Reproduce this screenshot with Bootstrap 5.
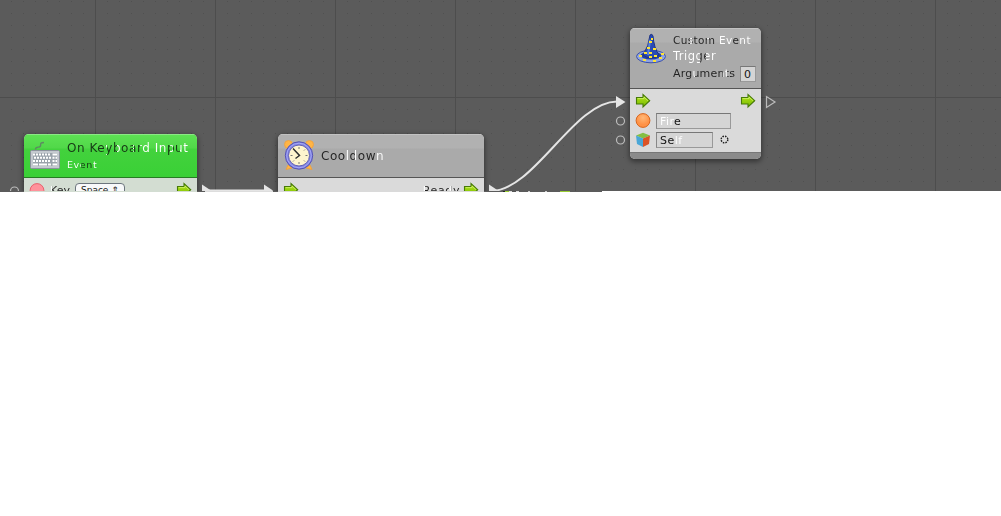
<!DOCTYPE html>
<html lang="en"><head><meta charset="utf-8"><title>Flow graph</title>
<link rel="stylesheet" href="https://cdn.jsdelivr.net/npm/bootstrap@5.3.0/dist/css/bootstrap.min.css">
<style>
body{background:#fff;font-family:"DejaVu Sans",Verdana,sans-serif;font-size:11px;line-height:15px;color:#161616}
.graph{height:191px;background-color:#5b5b5b;background-image:linear-gradient(90deg,#4d4d4d 1px,transparent 1px),linear-gradient(#4d4d4d 1px,transparent 1px),conic-gradient(from 270deg at 1px 1px,#505050 90deg,transparent 0);background-size:120px 120px,120px 120px,12px 12px;background-position:95px 0,0 97px,11px 1px}
.edge-row{height:1px;width:602px;background:linear-gradient(90deg,#5b5b5b 24px,#d3ddd2 24px 197px,#5b5b5b 197px 205px,#ddd 205px 273px,#5b5b5b 273px 278px,#dadada 278px 484px,#5b5b5b 484px 503px,#222 503px 505px,#9c3 505px 509px,#ddd 509px 512px,#555 512px 516px,#ddd 516px 519px,#5b5b5b 519px 528px,#ccc 528px 530px,#5b5b5b 530px 545px,#ccc 545px 547px,#5b5b5b 547px 560px,#9c3 560px 570px,#5b5b5b 570px)}
.wires{left:0;top:0}
.node{border-radius:5px;background:#dadada;box-shadow:0 2px 5px 1px #0006;overflow:hidden}
.node-head{background:linear-gradient(#b1b1b1 0 14px,#aaa 15px);border-bottom:1px solid #555;box-shadow:inset 0 1px #c2c2c2}
.node-green .node-head{background:linear-gradient(#5ee254,#51d849 14px,#43d23d 15px,#3ad036);border-color:#277c24;box-shadow:inset 0 1px #8be885}
.node-green{background:#d3ddd2}
.n1{left:24px;top:134px;width:173px;height:70px}
.n2{left:278px;top:134px;width:206px;height:70px}
.n3{left:630px;top:28px;width:131px;height:131px}
.n1 .node-head,.n2 .node-head{height:44px}
.n3 .node-head{height:61px}
.n3 .node-foot{height:7px;background:#8b8b8b;border-top:1px solid #777}
.ink{color:transparent;background-clip:text;-webkit-background-clip:text;white-space:nowrap;display:inline-block}
.cell{border:1px solid #999;border-top-color:#777;border-left-color:#888;background:#d5d5d5;height:16px;line-height:15px;padding-left:3px}
.picker{margin:1px 0 0 5px;width:50px;height:16px;font-size:9px;line-height:13px;padding-left:5px;white-space:nowrap}
svg{display:block;flex:none}
</style></head><body>
<svg width="0" height="0" class="position-absolute"><defs>
<linearGradient id="g" x2="0" y2="1"><stop stop-color="#b5e51c"/><stop offset="1" stop-color="#78bb00"/></linearGradient>
<radialGradient id="orange" cy=".3"><stop stop-color="#ffb878"/><stop offset="1" stop-color="#ff9246"/></radialGradient>
<symbol id="arrow" viewBox="0 0 16 16"><path d="M1.500 4.500H8V1.500L14.700 7.700 8 14V11H1.500Z" fill="url(#g)" stroke="#477a09" stroke-width="1.100"/><path d="M2.600 5.600H9V4L12.900 7.700" fill="none" stroke="#d1f16e" stroke-width=".8"/></symbol>
</defs></svg>
<main class="graph position-relative overflow-hidden">
<svg class="wires position-absolute" width="1001" height="191"><g fill="none" stroke="#e5e5e5" stroke-width="2"><path d="M203 190.500H271M491 191C534 191 574 101.500 617 101.500"/></g>
<path d="M202 184.500V196L211 190.500ZM264 184.500V196L273 190.500ZM489 184.500V196L498 190.500ZM616 96V108L625.500 102Z" fill="#e5e5e5"/>
<g fill="none" stroke="#bdbdbd" stroke-width="1.200"><circle cx="14.500" cy="191" r="4"/><circle cx="620.500" cy="121" r="4"/><circle cx="620.500" cy="140" r="4"/><path d="M766.500 96.500V107.500L775 102Z"/></g></svg>
<section class="node node-green n1 position-absolute">
<header class="node-head d-flex">
<svg width="32" height="32" viewBox="0 0 32 32" style="margin:6px 0 0 5px"><path d="M6.500 9.500c0-4 4.500-1 5-3.500s-1-3 3.500-3.500" fill="none" stroke="#5d8b62" stroke-width="1.400"/><rect x="1.500" y="10.500" width="29" height="18" rx="1" fill="#c3c8ce" stroke="#8a929b"/><rect x="4" y="13" width="24" height="13" fill="#9aa3ab"/><g fill="none" stroke="#fff" stroke-width="2"><path d="M4 14.500H22" stroke-dasharray="2 1"/><path d="M5 17.750H22" stroke-dasharray="2 1"/><path d="M4 21H22" stroke-dasharray="2 1"/><path d="M4 24.500H9M10 24.500H18M19 24.500H22M23.500 14.500H28M23.500 17.750H25.500M26.500 17.750H28M23.500 21H25.500M26.500 21H28M23.500 24.500H28"/></g></svg>
<div style="margin:7px 0 0 6px"><div><span class="ink" style="font-size:12px;letter-spacing:.55px;background-image:linear-gradient(90deg,#163a15 39px,#fff 39px 40px,#163a15 40px 50px,#fff 50px 54px,#163a15 54px 66px,#fff 66px 67px,#163a15 67px 73px,#fff 73px 82px,#163a15 82px 88px,#fff 88px 99px,#163a15 99px 103px,#fff 103px 106px,#163a15 106px 113px,#fff 113px)">On Keyboard Input</span></div><div style="margin-top:1px"><span class="ink" style="font-size:9.500px;letter-spacing:.6px;background-image:linear-gradient(90deg,#fff 14px,#163a15 14px 26px,#fff 26px)">Event</span></div></div></header>
<div class="d-flex" style="padding:4px 5px 0 5px"><svg width="16" height="16"><circle cx="8" cy="8.500" r="6.900" fill="#ff929b" stroke="#e6636e"/></svg><span class="ink" style="margin:1px 0 0 5px;background-image:linear-gradient(90deg,#fff 2px,#222 2px)">Key</span><span class="picker border border-secondary rounded-1 bg-light">Space ⇕</span><svg class="ms-auto" width="16" height="16"><use href="#arrow"/></svg></div>
</section>
<section class="node n2 position-absolute">
<header class="node-head d-flex">
<svg width="32" height="34" viewBox="0 0 32 34" style="margin:5px 0 0 5px"><g fill="#ffb546" stroke="#f0a03a" stroke-width=".8"><circle cx="5.500" cy="5.500" r="4"/><circle cx="26.500" cy="5.500" r="4"/><path d="M5 26L3 30.500 9 29ZM27 26l2 4.500-6-1.500Z"/></g><circle cx="16" cy="16.500" r="13.700" fill="#7f82e2" stroke="#5654b4"/><circle cx="16" cy="16.500" r="12.300" fill="none" stroke="#a5a8f5"/><circle cx="16" cy="16.500" r="10.500" fill="#fff5ce" stroke="#6664b4"/><path d="M16 8v2M16 23v2M7.500 16.500h2M22.500 16.500h2M22 10.500l-1 1M10 22.500l1-1M22 22.500l-1-1" stroke="#777"/><path d="M10 9.500L16.500 16.500 12.500 19.500" fill="none" stroke="#333" stroke-width="1.500"/></svg>
<div style="margin:15px 0 0 6px"><span class="ink" style="font-size:12px;letter-spacing:.55px;background-image:linear-gradient(90deg,#242424 25px,#fff 25px 28px,#242424 28px 34px,#fff 34px 37px,#242424 37px 55px,#fff 55px)">Cooldown</span></div></header>
<div class="d-flex" style="padding:4px 5px 0 5px"><svg width="16" height="16"><use href="#arrow"/></svg><span class="ink ms-auto" style="margin-top:1px;margin-right:3px;letter-spacing:.6px;background-image:linear-gradient(90deg,#fff 2px,#222 2px 26px,#fff 26px 28px,#222 28px)">Ready</span><svg width="16" height="16"><use href="#arrow"/></svg></div>
</section>
<section class="node n3 position-absolute d-flex flex-column">
<header class="node-head d-flex">
<svg width="32" height="34" viewBox="0 0 32 34" style="margin:5px 0 0 5px"><ellipse cx="16" cy="23.500" rx="14.500" ry="6.300" fill="#8fa3e2" stroke="#3c52a8"/><ellipse cx="16" cy="22.500" rx="10.500" ry="4" fill="#27429d"/><path d="M8 22Q14 13 15 2Q17 0 18 3Q19 15 24 22Q16 28 8 22Z" fill="#2a4bb5" stroke="#203584"/><path d="M15 7L13 22" stroke="#5b84e0" stroke-width="2"/><path fill="#ffe532" d="M16 5h2v2h-2zM14 8h3v2h-3zM12 14h3v2h-3zM18 15h3v2h-3zM9 19h3v2H9zM14 19h3v2h-3zM19 22h3v2h-3zM14 23h3v2h-3zM4 22h3v2H4zM26 20h3v2h-3zM24 24h3v2h-3zM18 27h3v2h-3zM8 26h3v2H8z"/></svg>
<div style="margin:5px 0 0 6px"><div><span class="ink" style="font-size:10.500px;letter-spacing:.35px;background-image:linear-gradient(90deg,#222 17px,#fff 17px 19px,#222 19px 34px,#fff 34px 36px,#222 36px 45px,#fff 45px 59px,#222 59px 66px,#fff 66px)">Custom Event</span></div><div style="margin-top:1px"><span class="ink" style="font-size:11.500px;letter-spacing:.5px;background-image:linear-gradient(90deg,#fff 27px,#333 27px 33px,#fff 33px)">Trigger</span></div><div class="d-flex" style="margin-top:2px"><span class="ink" style="letter-spacing:.2px;background-image:linear-gradient(90deg,#222 20px,#fff 20px 22px,#222 22px 50px,#fff 50px 54px,#222 54px)">Arguments</span><span class="cell" style="margin-left:5px;width:16px">0</span></div></div></header>
<div class="flex-grow-1" style="padding:4px 5px"><div class="d-flex justify-content-between"><svg width="16" height="16"><use href="#arrow"/></svg><svg width="16" height="16"><use href="#arrow"/></svg></div>
<div class="d-flex" style="margin-top:4px"><svg width="16" height="16"><circle cx="8" cy="7.500" r="6.900" fill="url(#orange)" stroke="#d76720"/></svg><div class="cell" style="margin-left:5px;width:75px"><span class="ink" style="letter-spacing:.4px;background-image:linear-gradient(90deg,#fff 14px,#111 14px)">Fire</span></div></div>
<div class="d-flex" style="margin-top:3px"><svg width="16" height="16" viewBox="0 0 16 16"><path d="M1 3.500L8 .8 15 3.500 8 6.500Z" fill="#85bf43"/><path d="M1 3.500L8 6.500V15L2 12Z" fill="#4aa7d7"/><path d="M8 6.500L15 3.500 14 12 8 15Z" fill="#db5326"/></svg><div class="cell" style="margin-left:5px;width:57px"><span class="ink" style="letter-spacing:.5px;background-image:linear-gradient(90deg,#111 15px,#fff 15px)">Self</span></div><svg style="margin-left:7px" width="10" height="16"><circle cx="4.500" cy="7.500" r="3" fill="none" stroke="#eee" stroke-width="1.500"/><circle cx="4.500" cy="7.500" r="3.300" fill="none" stroke="#222" stroke-width="1.500" stroke-dasharray="1.600 1"/></svg></div></div>
<footer class="node-foot"></footer></section>
</main><div class="edge-row"></div>
<script src="https://cdn.jsdelivr.net/npm/bootstrap@5.3.0/dist/js/bootstrap.bundle.min.js"></script>
</body></html>
